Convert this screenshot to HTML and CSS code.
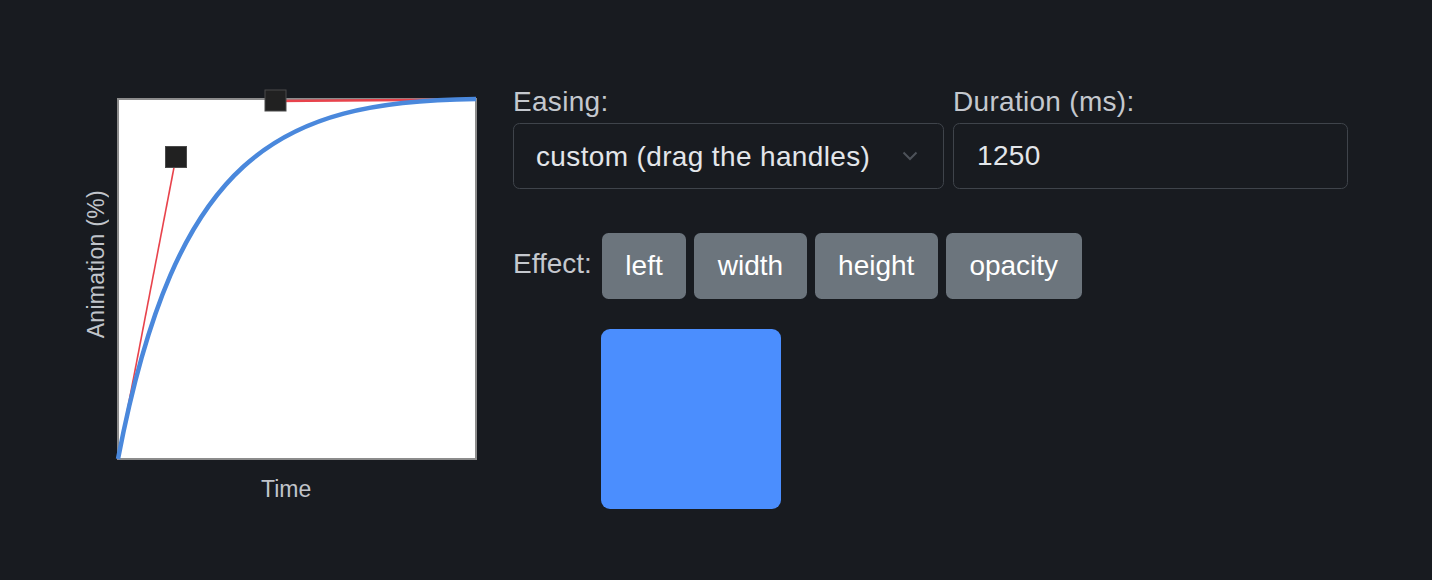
FILE: index.html
```html
<!DOCTYPE html>
<html lang="en">
<head>
<meta charset="utf-8">
<title>Easing editor</title>
<link rel="stylesheet" href="styles.css">
</head>
<body>
<main class="page">
  <figure class="chart">
    <div class="y-col"><span class="y-label">Animation (%)</span></div>
    <div class="plot-col">
      <svg class="plot" width="360" height="362" viewBox="0 0 360 362">
        <rect x="1" y="1" width="358" height="360" fill="#fff" stroke="#8c8c8c" stroke-width="2"/>
        <line x1="1" y1="361" x2="59" y2="59" stroke="#e8434c" stroke-width="1.6"/>
        <line x1="359" y1="1.5" x2="158.5" y2="3" stroke="#e8434c" stroke-width="2.4"/>
        <path d="M1 361 C59 59 158.5 3 359 1" fill="none" stroke="#4a88dc" stroke-width="4.5"/>
        <rect x="48.5" y="48.5" width="21" height="21" fill="#212121" stroke="#4a4a4a" stroke-width="1"/>
        <rect x="148" y="-8" width="21" height="21" fill="#212121" stroke="#4a4a4a" stroke-width="1"/>
      </svg>
      <div class="x-label">Time</div>
    </div>
  </figure>

  <section class="controls">
    <div class="fields">
      <div class="field easing">
        <label class="label" for="easing">Easing:</label>
        <div class="select-wrap">
          <select id="easing" class="control select">
            <option>custom (drag the handles)</option>
          </select>
          <svg class="chevron" width="16" height="10" viewBox="0 0 16 10"><path d="M1.5 1.5 L8 8 L14.5 1.5" fill="none" stroke="#4d5259" stroke-width="2"/></svg>
        </div>
      </div>
      <div class="field duration">
        <label class="label" for="duration">Duration (ms):</label>
        <input id="duration" class="control input" type="text" value="1250">
      </div>
    </div>

    <div class="effect-row">
      <span class="label effect-label">Effect:</span>
      <div class="buttons">
        <button class="btn">left</button>
        <button class="btn">width</button>
        <button class="btn">height</button>
        <button class="btn">opacity</button>
      </div>
    </div>

    <div class="demo-row">
      <div class="demo-box"></div>
    </div>
  </section>
</main>
</body>
</html>
```

FILE: styles.css
```css
* { box-sizing: border-box; }

html, body {
  margin: 0;
  height: 100%;
  background: #181b20;
}

body {
  font-family: "Liberation Sans", Arial, sans-serif;
  color: #c4c8ce;
}

.page {
  display: flex;
  gap: 36px;
  padding: 81px 0 0 80px;
}

.chart {
  display: flex;
  margin: 0;
}

.y-col {
  width: 37px;
  padding-top: 109px;
  padding-left: 3px;
}

.y-label {
  display: block;
  writing-mode: vertical-rl;
  transform: rotate(180deg);
  font-size: 23px;
  line-height: 26px;
  letter-spacing: 0.3px;
  color: #c0c4ca;
  white-space: nowrap;
}

.plot-col {
  width: 360px;
  padding-top: 17px;
}

.plot {
  display: block;
  overflow: visible;
}

.x-label {
  margin-top: 16px;
  padding-left: 144px;
  font-size: 23px;
  line-height: 26px;
  color: #c0c4ca;
}

.controls {
  display: flex;
  flex-direction: column;
}

.fields {
  display: flex;
  gap: 9px;
}

.field {
  display: flex;
  flex-direction: column;
}

.easing { width: 431px; }
.duration { width: 395px; }

.label {
  font-size: 28px;
  line-height: 42px;
  letter-spacing: 0.3px;
  color: #c4c8ce;
}

.select-wrap {
  position: relative;
}

.control {
  display: block;
  width: 100%;
  height: 66px;
  margin: 0;
  border: 1px solid #3f444b;
  border-radius: 6.5px;
  background: transparent;
  font-family: "Liberation Sans", Arial, sans-serif;
  font-size: 28px;
  letter-spacing: 0.36px;
  color: #e3e6ea;
  outline: none;
}

.select {
  appearance: none;
  -webkit-appearance: none;
  padding: 0 60px 0 22px;
}

.input {
  padding: 0 22px 0 23px;
}

.chevron {
  position: absolute;
  left: 389px;
  top: 28px;
  pointer-events: none;
}

.effect-row {
  display: flex;
  gap: 10px;
  margin-top: 44px;
}

.effect-label {
  padding-top: 10px;
  letter-spacing: 0;
}

.buttons {
  display: flex;
  gap: 8px;
}

.btn {
  height: 66px;
  padding: 0 23.5px;
  border: none;
  border-radius: 6.5px;
  background: #6c757d;
  color: #ffffff;
  font-family: "Liberation Sans", Arial, sans-serif;
  font-size: 28px;
  line-height: 42px;
}

.demo-row {
  margin-top: 30px;
  padding-left: 88px;
}

.demo-box {
  width: 180px;
  height: 180px;
  border-radius: 9px;
  background: #4b8efe;
}
```
